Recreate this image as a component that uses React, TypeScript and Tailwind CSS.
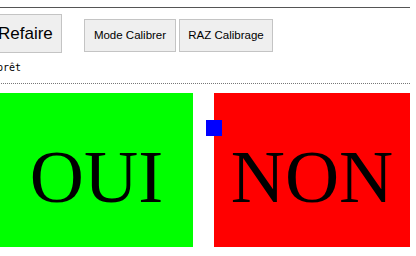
export default function App() {
  return (
    <div className="relative h-[256px] w-[416px] overflow-hidden bg-white font-['Liberation_Sans',Arial,sans-serif] text-black">
      <div className="ml-[-8px] w-[418px]">
        <hr className="mt-[7px] border-0 border-t border-[#555]" />
        <div className="mt-[6px] flex items-start">
          <button className="h-[39px] w-[70px] border border-[#c4c4c4] bg-[#efefef] pl-[5px] text-left text-[17px] leading-none">
            Refaire
          </button>
          <button className="ml-[22px] mt-[5px] h-[33px] w-[92px] border border-[#c4c4c4] bg-[#efefef] text-[11.5px]">
            Mode Calibrer
          </button>
          <button className="ml-[3px] mt-[5px] h-[33px] w-[94px] border border-[#c4c4c4] bg-[#efefef] text-[11.5px]">
            RAZ Calibrage
          </button>
        </div>
        <div className="mt-[8px] pl-[5px] font-['DejaVu_Sans_Mono',monospace] text-[10px] leading-[14px]">
          prêt
        </div>
        <div className="mt-[8px] border-t border-dotted border-[#777]" />
        <div className="relative mt-[9px] flex pl-[8px]">
          <div className="flex h-[154px] w-[193px] items-center justify-center bg-[#00ff00] pt-[12px] font-['Liberation_Serif','Times_New_Roman',serif] text-[75px] leading-none">
            OUI
          </div>
          <div className="ml-[21px] flex h-[154px] w-[196px] items-center justify-center bg-[#ff0000] pt-[12px] font-['Liberation_Serif','Times_New_Roman',serif] text-[75px] leading-none">
            NON
          </div>
          <div className="absolute left-[214px] top-[27px] h-[16px] w-[16px] bg-[#0000ff]" />
        </div>
      </div>
    </div>
  );
}
